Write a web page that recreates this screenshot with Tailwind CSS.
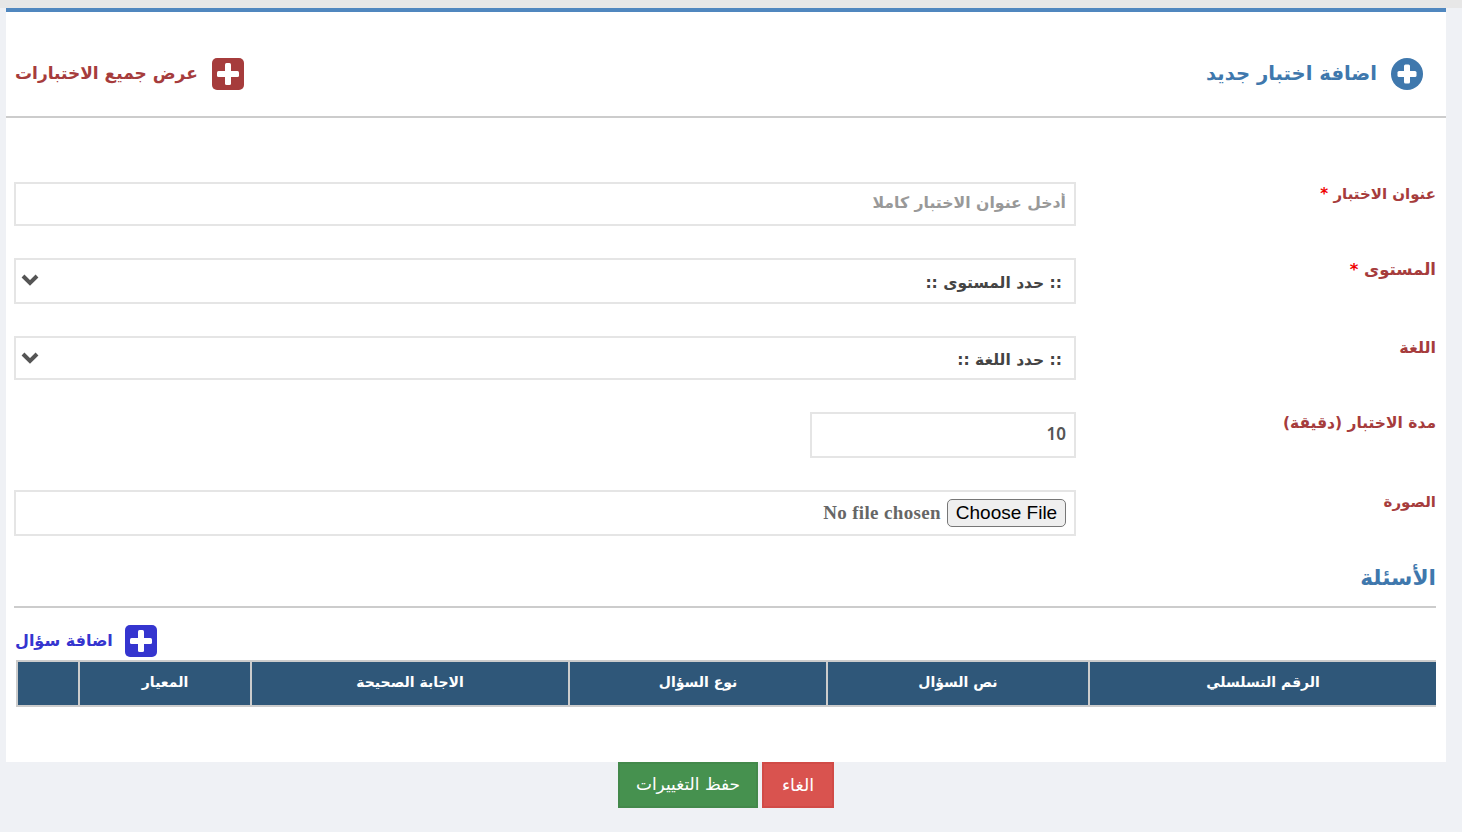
<!doctype html>
<html lang="ar" dir="rtl">

<head>
  <meta charset="UTF-8" />
  <title>اضافة اختبار جديد</title>
  <script src="https://cdn.jsdelivr.net/npm/@tailwindcss/browser@4"></script>
</head>

<body class="bg-[#eff1f5] font-['DejaVu_Sans',sans-serif] h-[832px] overflow-hidden">
  <div class="h-2 bg-[#e7e7e7]"></div>

  <div class="mx-[16px] ml-[6px] w-[1440px] h-[754px] bg-white border-t-4 border-[#5087bf]">
    <!-- header -->
    <div class="h-[106px] border-b-2 border-[#cccccc] flex items-center justify-between pr-[23px] pl-[9px] pt-[20px]">
      <a class="flex items-center gap-[14px] text-[#3f78ad] text-[19.6px] font-bold">
        <svg class="w-8 h-8" viewBox="0 0 32 32">
          <circle cx="16" cy="16" r="16" fill="#3f78ad" />
          <rect x="13" y="6.5" width="6" height="19" rx="1.5" fill="#fff" />
          <rect x="6.5" y="13" width="19" height="6" rx="1.5" fill="#fff" />
        </svg>
        <span>اضافة اختبار جديد</span>
      </a>
      <a class="flex items-center gap-[14px] text-[#a63c3c] text-[17px] font-bold">
        <svg class="w-8 h-8" viewBox="0 0 32 32">
          <rect width="32" height="32" rx="5" fill="#a63c3c" />
          <rect x="13" y="5" width="6" height="22" rx="1.5" fill="#fff" />
          <rect x="5" y="13" width="22" height="6" rx="1.5" fill="#fff" />
        </svg>
        <span>عرض جميع الاختبارات</span>
      </a>
    </div>

    <!-- form -->
    <form class="pr-[10px] pl-[8px] pt-[64px]">
      <div class="flex justify-between items-start h-[76px]">
        <label class="text-[15px] font-bold text-[#a63c3c] pt-[1px]">عنوان الاختبار <span class="text-[#f00000]">*</span></label>
        <input type="text" placeholder="أدخل عنوان الاختبار كاملا"
          class="w-[1062px] h-[44px] border-2 border-[#e5e5e5] px-[8px] pb-[3px] text-[15.7px] font-bold text-[#555] placeholder:text-[#999] outline-none" />
      </div>

      <div class="flex justify-between items-start h-[78px]">
        <label class="text-[16.5px] font-bold text-[#a63c3c]">المستوى <span class="text-[#f00000]">*</span></label>
        <div class="relative w-[1062px]">
          <select class="appearance-none w-full h-[46px] border-2 border-[#e5e5e5] bg-white px-[12px] pt-[5px] text-[15.5px] font-bold text-[#444] outline-none">
            <option>:: حدد المستوى ::</option>
          </select>
          <svg class="absolute left-[6px] top-[16px] w-5 h-3" viewBox="0 0 20 12">
            <path d="M3 2l7 7 7-7" fill="none" stroke="#555" stroke-width="4" />
          </svg>
        </div>
      </div>

      <div class="flex justify-between items-start h-[76px]">
        <label class="text-[16px] font-bold text-[#a63c3c]">اللغة</label>
        <div class="relative w-[1062px]">
          <select class="appearance-none w-full h-[44px] border-2 border-[#e5e5e5] bg-white px-[12px] pt-[6px] text-[15.5px] font-bold text-[#444] outline-none">
            <option>:: حدد اللغة ::</option>
          </select>
          <svg class="absolute left-[6px] top-[16px] w-5 h-3" viewBox="0 0 20 12">
            <path d="M3 2l7 7 7-7" fill="none" stroke="#555" stroke-width="4" />
          </svg>
        </div>
      </div>

      <div class="flex justify-between items-start h-[78px]">
        <label class="text-[15.5px] font-bold text-[#a63c3c]">مدة الاختبار (دقيقة)</label>
        <div class="w-[1062px]">
          <input type="text" value="10"
            class="w-[266px] h-[46px] border-2 border-[#e5e5e5] px-[8px] pb-[4px] font-['Noto_Sans',sans-serif] text-[17px] font-semibold text-[#555] outline-none" />
        </div>
      </div>

      <div class="flex justify-between items-start h-[74px]">
        <label class="text-[15px] font-bold text-[#a63c3c] pt-[1px]">الصورة</label>
        <input type="file"
          class="w-[1062px] h-[46px] border-2 border-[#e5e5e5] px-[8px] py-[7px] font-['Liberation_Serif',serif] text-[19px] tracking-[0.35px] leading-[26px] font-bold text-[#666] file:font-['Liberation_Sans',sans-serif] file:font-normal file:tracking-normal file:text-[19px] file:text-black file:bg-[#efefef] file:border-[1.5px] file:border-[#777777] file:rounded-[5px] file:w-[119px] file:h-[28px] file:pb-[2px] file:ml-[6px]" />
      </div>

      <h3 class="text-[21.7px] font-bold text-[#3f78ad] h-[28px] leading-[28px]">الأسئلة</h3>
      <div class="border-b-2 border-[#cccccc] mt-[14px]"></div>

      <div class="flex justify-end mt-[17px] pl-[1px]">
        <a class="flex items-center gap-[12px] text-[#3535cf] text-[16px] font-bold">
          <svg class="w-8 h-8" viewBox="0 0 32 32">
            <rect width="32" height="32" rx="5" fill="#3535cf" />
            <rect x="13" y="5" width="6" height="22" rx="1.5" fill="#fff" />
            <rect x="5" y="13" width="22" height="6" rx="1.5" fill="#fff" />
          </svg>
          <span>اضافة سؤال</span>
        </a>
      </div>

      <table class="table-fixed w-[1419px] mt-[3px] mr-0 ml-[3px] border-collapse text-white text-[14px] font-bold">
        <colgroup>
          <col class="w-[347px]" />
          <col class="w-[262px]" />
          <col class="w-[258px]" />
          <col class="w-[318px]" />
          <col class="w-[172px]" />
          <col class="w-[62px]" />
        </colgroup>
        <tr class="h-[45px] bg-[#2f5779] text-center">
          <th class="border-y-2 border-l-2 border-[#cccccc] pb-[3px]">الرقم التسلسلي</th>
          <th class="border-y-2 border-l-2 border-[#cccccc] pb-[3px]">نص السؤال</th>
          <th class="border-y-2 border-l-2 border-[#cccccc] pb-[3px]">نوع السؤال</th>
          <th class="border-y-2 border-l-2 border-[#cccccc] pb-[3px]">الاجابة الصحيحة</th>
          <th class="border-y-2 border-l-2 border-[#cccccc] pb-[3px]">المعيار</th>
          <th class="border-y-2 border-l-2 border-[#cccccc]"></th>
        </tr>
      </table>
    </form>
  </div>

  <!-- actions -->
  <div class="flex justify-center gap-[4px] pr-[10px]">
    <button class="w-[72px] h-[46px] bg-[#d9534f] border-2 border-[#d14b47] text-white text-[17.5px]">الغاء</button>
    <button class="w-[140px] h-[46px] bg-[#46914f] border-2 border-[#43894b] text-white text-[17px]">حفظ التغييرات</button>
  </div>
</body>

</html>
